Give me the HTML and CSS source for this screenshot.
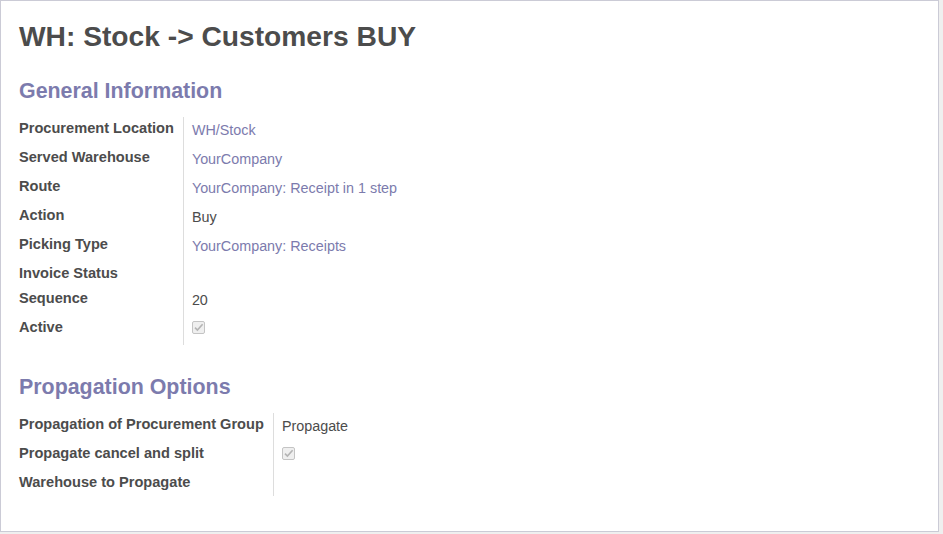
FILE: index.html
```html
<!DOCTYPE html>
<html>
<head>
<meta charset="utf-8">
<link rel="stylesheet" href="styles.css">
</head>
<body>
<div class="sheet">
  <h1 class="title">WH: Stock -&gt; Customers BUY</h1>

  <h2 class="section">General Information</h2>
  <div class="group group-general">
    <div class="label">Procurement Location</div>
    <div class="value"><a class="link">WH/Stock</a></div>
    <div class="label">Served Warehouse</div>
    <div class="value"><a class="link">YourCompany</a></div>
    <div class="label">Route</div>
    <div class="value"><a class="link">YourCompany: Receipt in 1 step</a></div>
    <div class="label">Action</div>
    <div class="value">Buy</div>
    <div class="label">Picking Type</div>
    <div class="value"><a class="link">YourCompany: Receipts</a></div>
    <div class="label">Invoice Status</div>
    <div class="value empty"></div>
    <div class="label">Sequence</div>
    <div class="value">20</div>
    <div class="label">Active</div>
    <div class="value"><span class="check"><svg width="13" height="13" viewBox="0 0 13 13"><rect x="0.5" y="0.5" width="12" height="12" rx="1.5" fill="#efefef" stroke="#c4c4c4"/><path d="M3 6.6 L5.4 9 L10.6 3.2" fill="none" stroke="#b4b4b4" stroke-width="1.6"/></svg></span></div>
  </div>

  <h2 class="section section-2">Propagation Options</h2>
  <div class="group group-prop">
    <div class="label">Propagation of Procurement Group</div>
    <div class="value">Propagate</div>
    <div class="label">Propagate cancel and split</div>
    <div class="value"><span class="check"><svg width="13" height="13" viewBox="0 0 13 13"><rect x="0.5" y="0.5" width="12" height="12" rx="1.5" fill="#efefef" stroke="#c4c4c4"/><path d="M3 6.6 L5.4 9 L10.6 3.2" fill="none" stroke="#b4b4b4" stroke-width="1.6"/></svg></span></div>
    <div class="label">Warehouse to Propagate</div>
    <div class="value empty"></div>
  </div>
</div>
</body>
</html>
```

FILE: styles.css
```css
html, body {
  margin: 0;
  padding: 0;
  background: #efefef;
}
body {
  font-family: "Liberation Sans", Arial, sans-serif;
  color: #4c4c4c;
  width: 943px;
  height: 534px;
  overflow: hidden;
}
.sheet {
  box-sizing: border-box;
  width: 939px;
  height: 532px;
  background: #ffffff;
  border: 1px solid #cbcbd6;
  padding: 19px 18px 0 18px;
}
.title {
  margin: 0;
  font-size: 28.2px;
  line-height: 32px;
  font-weight: bold;
  color: #4c4c4c;
}
.section {
  margin: 26px 0 0 0;
  font-size: 21.4px;
  line-height: 26px;
  font-weight: bold;
  color: #7c7bad;
}
.section-2 {
  margin-top: 29px;
}
.group {
  display: grid;
  grid-template-columns: auto 1fr;
}
.group-general {
  margin-top: 13px;
}
.group-prop {
  margin-top: 13px;
}
.label {
  font-weight: bold;
  font-size: 14.6px;
  line-height: 18px;
  padding: 2px 9px 5px 0;
  border-right: 1px solid #dddddd;
  white-space: nowrap;
}
.value {
  font-size: 14.35px;
  line-height: 18px;
  padding: 4px 0 7px 8px;
}
.value.empty {
  padding: 0;
}
.link {
  color: #7c7bad;
  text-decoration: none;
}
.check {
  display: inline-block;
  height: 18px;
  padding-top: 1px;
  box-sizing: border-box;
  vertical-align: top;
}
.check svg {
  display: block;
}
```
